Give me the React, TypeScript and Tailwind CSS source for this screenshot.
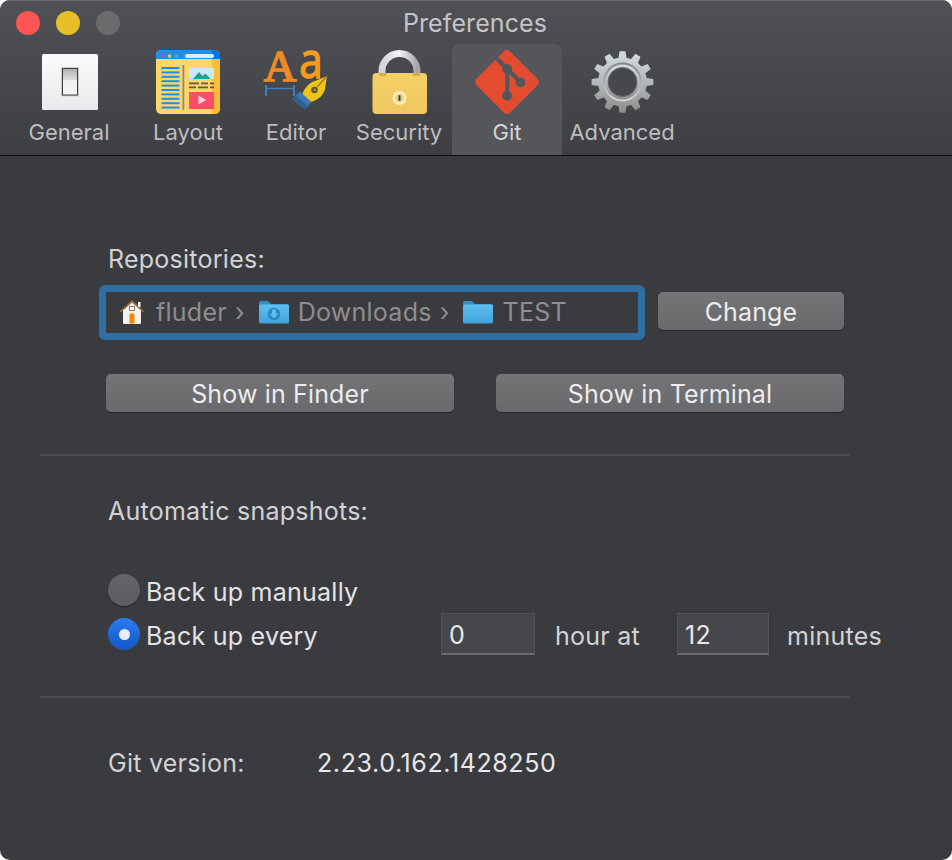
import { SiGit } from "react-icons/si";

const font = "font-['Inter','Liberation_Sans',sans-serif]";

function SwitchIcon() {
  return (
    <svg width="56" height="56" viewBox="0 0 56 56">
      <defs>
        <linearGradient id="sw" x1="0" y1="0" x2="0" y2="1">
          <stop offset="0" stopColor="#fbfbfc" />
          <stop offset="1" stopColor="#e9eaec" />
        </linearGradient>
        <linearGradient id="rock" x1="0" y1="0" x2="0" y2="1">
          <stop offset="0" stopColor="#b0b1b1" />
          <stop offset="0.42" stopColor="#dcddde" />
          <stop offset="0.46" stopColor="#f2f2f3" />
          <stop offset="1" stopColor="#f5f5f6" />
        </linearGradient>
      </defs>
      <rect x="0" y="0" width="56" height="56" rx="1.5" fill="url(#sw)" />
      <rect x="19" y="13" width="18" height="29.5" rx="1" fill="#cfcfd1" />
      <rect x="20" y="14" width="16" height="27.5" fill="#3c3c3e" />
      <rect x="21" y="15" width="14" height="25.5" fill="url(#rock)" />
    </svg>
  );
}

function LayoutIcon() {
  const lines = [17, 21.4, 25.8, 30.2, 34.6, 39, 43.4, 47.8, 52.2, 56.6];
  return (
    <svg width="64" height="64" viewBox="0 0 64 64">
      <rect x="0" y="0" width="64" height="64" rx="5" fill="#ffd66b" />
      <path d="M56 9h8v50a5 5 0 0 1-5 5h-3z" fill="#fdbb3a" />
      <path d="M5 0h54a5 5 0 0 1 5 5v4H0V5a5 5 0 0 1 5-5z" fill="#1e8ff0" />
      <path d="M56 0h3a5 5 0 0 1 5 5v4h-8z" fill="#0f74d8" />
      <circle cx="6.5" cy="6" r="1.8" fill="#f0405a" />
      <circle cx="13.5" cy="6" r="1.8" fill="#ffc73a" />
      <circle cx="20.5" cy="6" r="1.8" fill="#36b8a8" />
      <rect x="29" y="4" width="29" height="4" rx="2" fill="#d6f1fb" />
      {lines.map((y) => (
        <rect key={y} x="5.5" y={y} width="18" height="2" fill="#1e8ff0" />
      ))}
      <rect x="26.5" y="15" width="1.8" height="45" fill="#8a8a84" />
      <rect x="33" y="18" width="25" height="11" fill="#c6ecf7" />
      <path d="M37 29l6-7 3.5 4 3-2.5 5 5.5z" fill="#17a39b" />
      <rect x="33" y="32.5" width="10" height="1.8" fill="#5d5a4c" />
      <rect x="45" y="32.5" width="7" height="1.8" fill="#5d5a4c" />
      <rect x="54" y="32.5" width="4" height="1.8" fill="#5d5a4c" />
      <rect x="33" y="36.5" width="7" height="1.8" fill="#5d5a4c" />
      <rect x="42" y="36.5" width="10" height="1.8" fill="#5d5a4c" />
      <rect x="54" y="36.5" width="4" height="1.8" fill="#5d5a4c" />
      <rect x="33" y="42" width="25" height="17" fill="#fb4d68" />
      <path d="M42.5 45.5l7.5 4.5-7.5 4.5z" fill="#f3d9d6" />
    </svg>
  );
}

function EditorIcon() {
  return (
    <svg width="66" height="64" viewBox="0 0 66 64" className="overflow-visible">
      <text x="17" y="30.5" textAnchor="middle" fontFamily="'Liberation Serif',serif" fontSize="45" fill="#ee8a24" stroke="#ee8a24" strokeWidth="1.6">A</text>
      <text x="0" y="0" transform="translate(48 28) scale(0.86 1)" textAnchor="middle" fontFamily="'Open Sans',sans-serif" fontSize="49" fill="#f39c1f" stroke="#f39c1f" strokeWidth="1.4">a</text>
      <path d="M3 35v11M31 35v11" stroke="#3f7fc4" strokeWidth="2" />
      <path d="M3 38.5h28" stroke="#3f7fc4" strokeWidth="1.5" />
      <path d="M64 26L52 31c-4 1-10 5-13 14l9 7c8-2 13-8 14-13z" fill="#f2c317" />
      <path d="M64 26L54 37" stroke="#8c7a33" strokeWidth="1.2" />
      <circle cx="51.5" cy="40" r="3.3" fill="#5b5433" />
      <circle cx="51.5" cy="40" r="1.4" fill="#a58a2c" />
      <path d="M37 41.5l11.5 10.5-6.5 7.5-13-10.5z" fill="#3f77ad" />
      <path d="M33 46l12.5 10.5-3.5 3-13-10.5z" fill="#2f5f94" />
    </svg>
  );
}

function LockIcon() {
  return (
    <svg width="56" height="64" viewBox="0 0 56 64" className="ml-[2px]">
      <defs>
        <linearGradient id="shackle" x1="0" y1="0" x2="1" y2="0">
          <stop offset="0" stopColor="#d5d5d6" />
          <stop offset="0.5" stopColor="#f2f2f2" />
          <stop offset="1" stopColor="#a6a6a8" />
        </linearGradient>
        <linearGradient id="lockbody" x1="0" y1="0" x2="0" y2="1">
          <stop offset="0" stopColor="#f5d165" />
          <stop offset="1" stopColor="#f0c763" />
        </linearGradient>
      </defs>
      <path d="M10 28V21a17.5 17.5 0 0 1 35 0v7" fill="none" stroke="url(#shackle)" strokeWidth="7" />
      <rect x="0.5" y="23" width="54.5" height="41" rx="4" fill="url(#lockbody)" />
      <rect x="7" y="23" width="7" height="3" fill="#b69a4c" opacity="0.6" />
      <rect x="41" y="23" width="7" height="3" fill="#b69a4c" opacity="0.6" />
      <circle cx="27.5" cy="48" r="7" fill="#fbeebb" />
      <circle cx="27.5" cy="48" r="4.5" fill="#e8d48e" />
      <rect x="26.5" y="45" width="2" height="6" rx="1" fill="#3d3a30" />
    </svg>
  );
}

function GearIcon() {
  const cx = 31.5;
  const cy = 32;
  const n = 12;
  let d = "";
  for (let i = 0; i < n; i++) {
    const a = (i / n) * Math.PI * 2 - Math.PI / 2;
    const w = Math.PI / n;
    const pts: [number, number][] = [
      [24.5, a - w * 0.62],
      [31, a - w * 0.36],
      [31, a + w * 0.36],
      [24.5, a + w * 0.62],
    ];
    pts.forEach(([r, t], j) => {
      const x = (cx + r * Math.cos(t)).toFixed(2);
      const y = (cy + r * Math.sin(t)).toFixed(2);
      d += `${i === 0 && j === 0 ? "M" : "L"}${x} ${y}`;
    });
  }
  d += "Z";
  return (
    <svg width="63" height="64" viewBox="0 0 63 64">
      <defs>
        <linearGradient id="gear" x1="0" y1="0" x2="0" y2="1">
          <stop offset="0" stopColor="#d3dde0" />
          <stop offset="0.5" stopColor="#b3b8ba" />
          <stop offset="1" stopColor="#8c8c8d" />
        </linearGradient>
        <linearGradient id="gearRing" x1="0" y1="0" x2="0" y2="1">
          <stop offset="0" stopColor="#7f8587" />
          <stop offset="1" stopColor="#d5d7d8" />
        </linearGradient>
      </defs>
      <path d={d} fill="url(#gear)" />
      <circle cx={cx} cy={cy} r="19.5" fill="url(#gearRing)" />
      <circle cx={cx} cy={cy} r="17.5" fill="url(#gear)" />
      <circle cx={cx} cy={cy} r="14.5" fill="#47484b" stroke="#6b6d6f" strokeWidth="1" />
    </svg>
  );
}

function HomeIcon() {
  return (
    <svg width="26" height="25" viewBox="0 0 26 25" className="shrink-0">
      <path d="M4 11L13 3l9 8v13a1 1 0 0 1-1 1H5a1 1 0 0 1-1-1z" fill="#f4f2ee" />
      <path d="M0.5 12.5L13 1l12.5 11.5-1.2 1L13 3.5 1.7 13.5z" fill="#9a6b3c" />
      <rect x="19" y="3" width="2.5" height="5" fill="#f4f2ee" />
      <rect x="10.5" y="14.5" width="5" height="10" fill="#f08a00" />
      <rect x="10.5" y="7.5" width="5" height="4" fill="#fff" stroke="#7a5a35" strokeWidth="0.8" />
    </svg>
  );
}

function FolderIcon({ download = false }: { download?: boolean }) {
  const id = download ? "fold-d" : "fold-p";
  return (
    <svg width="30" height="24" viewBox="0 0 30 24" className="block">
      <defs>
        <linearGradient id={id} x1="0" y1="0" x2="0" y2="1">
          <stop offset="0" stopColor="#62bfee" />
          <stop offset="1" stopColor="#3fa3dc" />
        </linearGradient>
      </defs>
      <path d="M0 3a2 2 0 0 1 2-2h7l3 3h16a2 2 0 0 1 2 2v5H0z" fill="#2f8fc7" />
      <rect x="0" y="4.5" width="30" height="19" rx="1.5" fill={`url(#${id})`} />
      {download && (
        <g>
          <circle cx="15" cy="14" r="6.2" fill="#2b86c2" />
          <path d="M13 9.5h4v4h2.5L15 18.5l-4.5-5H13z" fill="#63bdea" />
        </g>
      )}
    </svg>
  );
}

function Tab({ w, label, active, pt, children }: { w: string; label: string; active?: boolean; pt?: string; children: React.ReactNode }) {
  return (
    <div className={`${w} ${active ? "bg-[#55565a] rounded-t-lg" : ""} h-[111px] flex flex-col items-center`}>
      <div className={`h-[75px] flex items-start justify-center ${pt ?? "pt-[6px]"}`}>{children}</div>
      <span className={`text-[22px] leading-[26px] ${active ? "text-[#d4d4d6]" : "text-[#bdbdbf]"}`}>{label}</span>
    </div>
  );
}

function PushButton({ w, children }: { w: string; children: React.ReactNode }) {
  return (
    <button className={`${w} h-[38px] rounded-[5px] bg-gradient-to-b from-[#747577] to-[#69696c] shadow-[0_1px_1px_rgba(0,0,0,0.35)] pt-[3px] text-[25px] tracking-[0.15px] leading-[35px] text-[#ececee]`}>
      {children}
    </button>
  );
}

export default function App() {
  return (
    <div className={`${font} w-[952px] h-[860px] bg-white`}>
      <div className="w-full h-full rounded-[10px] overflow-hidden bg-[#3a3b3f] flex flex-col">
        <div className="h-[156px] shrink-0 bg-gradient-to-b from-[#505155] to-[#3e3f43] border-b border-[#0f0f10] border-t border-t-[#6a6b6e]">
          <div className="h-[43px] flex items-center relative">
            <div className="absolute left-[16px] top-[10px] flex gap-[16px]">
              <span className="w-[24px] h-[24px] rounded-full bg-[#fd5454]" />
              <span className="w-[24px] h-[24px] rounded-full bg-[#e6bf29]" />
              <span className="w-[24px] h-[24px] rounded-full bg-[#6a6b6d]" />
            </div>
            <span className="w-full text-center pt-[2px] pr-[2px] text-[25px] tracking-[0.1px] leading-[41px] text-[#c4c4c6]">Preferences</span>
          </div>
          <div className="flex pl-[8px]">
            <Tab w="w-[122px]" label="General" pt="pt-[10px] pl-[2px]"><SwitchIcon /></Tab>
            <Tab w="w-[116px]" label="Layout"><LayoutIcon /></Tab>
            <Tab w="w-[100px]" label="Editor"><EditorIcon /></Tab>
            <Tab w="w-[106px]" label="Security"><LockIcon /></Tab>
            <Tab w="w-[110px]" label="Git" active><SiGit size={64} color="#e44c30" /></Tab>
            <Tab w="w-[120px]" label="Advanced"><GearIcon /></Tab>
          </div>
        </div>

        <div className="flex-1 text-[25px] tracking-[0.25px] leading-[30px] text-[#d2d2d4]">
          <div className="pl-[108px] pt-[88px]">Repositories:</div>

          <div className="flex items-start ml-[99px] mt-[11px] gap-[13px]">
            <div className="w-[546px] h-[55px] border-[7px] border-[#2f6fa3] rounded-[6px] bg-[#3a3b3f] flex items-center pl-[13px] pb-[2px] text-[#8e8e90]">
              <HomeIcon />
              <span className="ml-[11px]">fluder</span>
              <span className="ml-[8px]">›</span>
              <span className="ml-[14px]"><FolderIcon download /></span>
              <span className="ml-[9px]">Downloads</span>
              <span className="ml-[8px]">›</span>
              <span className="ml-[13px]"><FolderIcon /></span>
              <span className="ml-[10px]">TEST</span>
            </div>
            <div className="pt-[7px]">
              <PushButton w="w-[186px]">Change</PushButton>
            </div>
          </div>

          <div className="flex ml-[106px] mt-[34px] gap-[42px]">
            <PushButton w="w-[348px]">Show in Finder</PushButton>
            <PushButton w="w-[348px]">Show in Terminal</PushButton>
          </div>

          <div className="ml-[40px] w-[810px] h-[2px] bg-[#4b4c50] mt-[42px]" />

          <div className="pl-[108px] mt-[40px]">Automatic snapshots:</div>

          <div className="pl-[108px] mt-[48px] flex items-center h-[32px] text-[#e4e4e6]">
            <span className="w-[32px] h-[32px] rounded-full bg-gradient-to-b from-[#636467] to-[#5c5d60] shadow-[0_1px_1px_rgba(0,0,0,0.4)]" />
            <span className="ml-[6px] pt-[4px]">Back up manually</span>
          </div>

          <div className="pl-[108px] mt-[12px] flex items-center h-[32px] text-[#e4e4e6]">
            <span className="w-[32px] h-[32px] rounded-full bg-gradient-to-b from-[#2a7cf0] to-[#1457c4] flex items-center justify-center shrink-0">
              <span className="w-[11px] h-[11px] rounded-full bg-[#e6eefc]" />
            </span>
            <span className="ml-[6px] pt-[4px] w-[295px]">Back up every</span>
            <span className="w-[94px] h-[42px] bg-[#45464a] border border-[#525357] border-b-2 border-b-[#6a6b6e] pl-[7px] text-[25px] leading-[42px] text-[#e8e8ea]">0</span>
            <span className="ml-[20px] pt-[4px] w-[122px] text-[#d2d2d4]">hour at</span>
            <span className="w-[92px] h-[42px] bg-[#45464a] border border-[#525357] border-b-2 border-b-[#6a6b6e] pl-[7px] text-[25px] leading-[42px] text-[#e8e8ea]">12</span>
            <span className="ml-[18px] pt-[4px] text-[#d2d2d4]">minutes</span>
          </div>

          <div className="ml-[40px] w-[810px] h-[2px] bg-[#4b4c50] mt-[46px]" />

          <div className="flex pl-[108px] mt-[50px]">
            <span className="w-[209px]">Git version:</span>
            <span className="text-[#e8e8ea] tracking-[0.6px]">2.23.0.162.1428250</span>
          </div>
        </div>
      </div>
    </div>
  );
}
